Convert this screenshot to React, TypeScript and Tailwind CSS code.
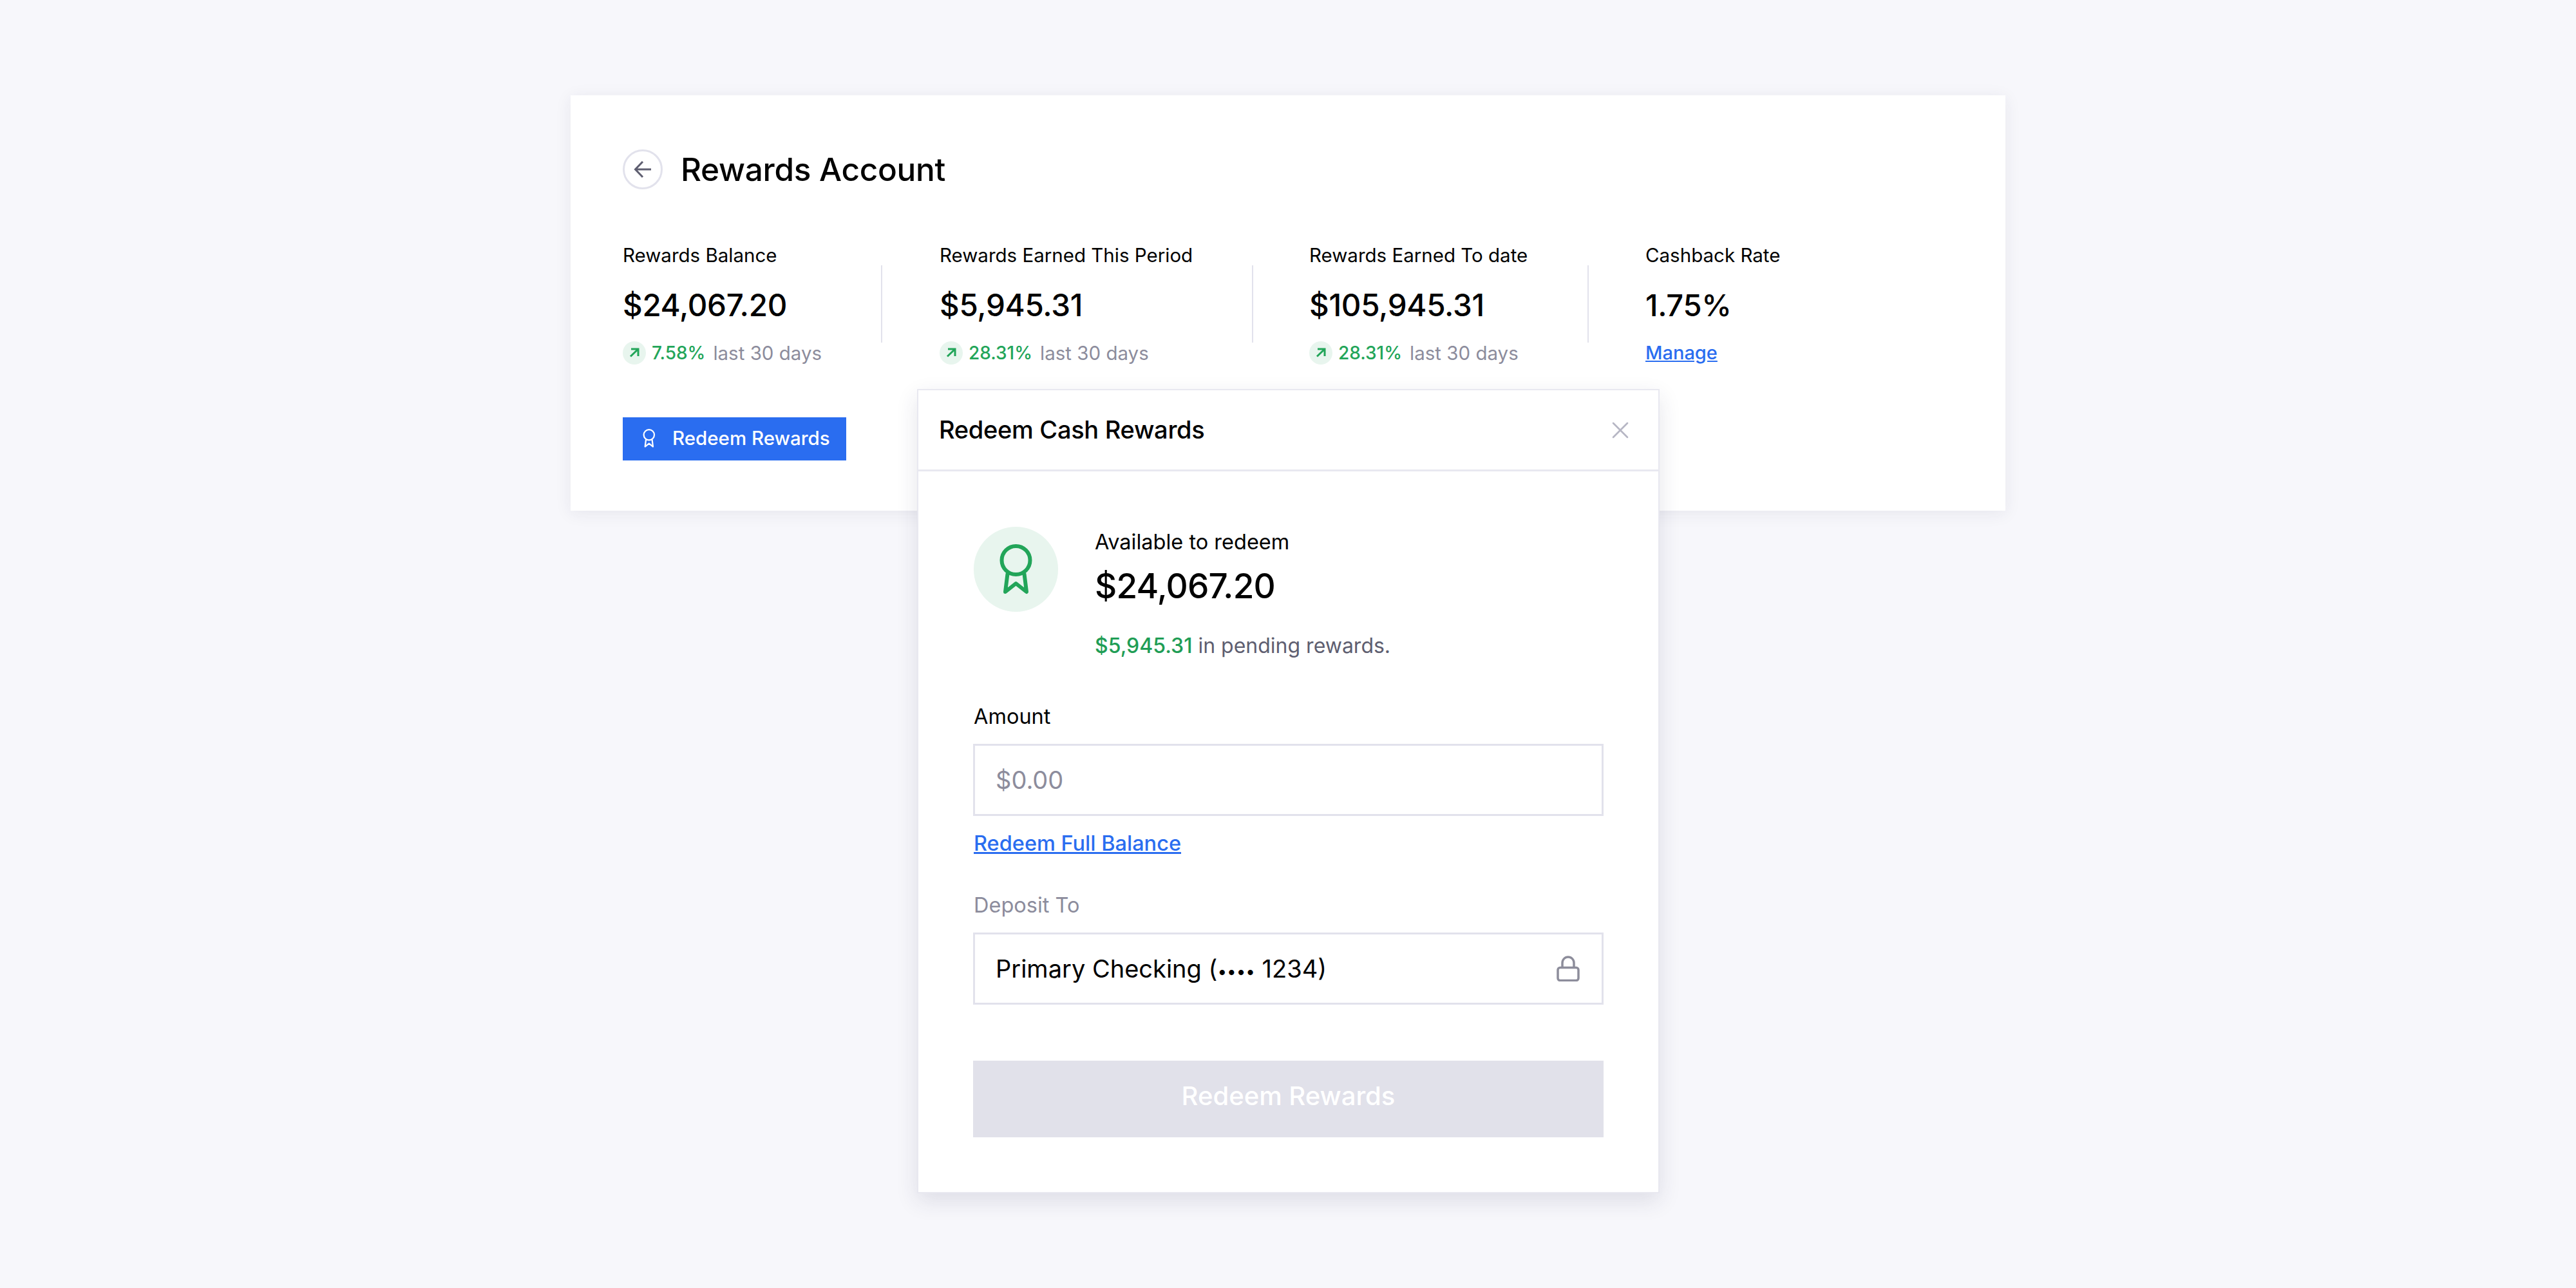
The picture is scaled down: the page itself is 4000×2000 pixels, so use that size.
import { X } from "lucide-react";

const stats = [
  { label: "Rewards Balance", value: "$24,067.20", pct: "7.58%", width: "w-[401px]", gap: "mr-[89px]" },
  { label: "Rewards Earned This Period", value: "$5,945.31", pct: "28.31%", width: "w-[485px]", gap: "mr-[87px]" },
  { label: "Rewards Earned To date", value: "$105,945.31", pct: "28.31%", width: "w-[432px]", gap: "mr-[88px]" },
];

function Award({ className }: { className: string }) {
  return (
    <svg viewBox="0 0 52 78" fill="none" stroke="currentColor" strokeWidth="6" strokeLinejoin="round" strokeLinecap="round" className={className}>
      <circle cx="25.5" cy="25" r="22" />
      <path d="M12.5 46 L9 74 L25.5 61 L42 74 L38.5 46" />
    </svg>
  );
}

function TrendBadge() {
  return (
    <span className="flex h-[36px] w-[36px] shrink-0 items-center justify-center rounded-full bg-[#e8f5ee]">
      <svg viewBox="0 0 36 36" fill="none" stroke="#22a559" strokeWidth="3" className="h-[36px] w-[36px]">
        <path d="M12 23.5 L24 12 M13 12 H24 V23" />
      </svg>
    </span>
  );
}

export default function App() {
  return (
    <div className="relative h-[2000px] w-[4000px] bg-[#f7f7fb] pt-[148px] font-['Inter',sans-serif] text-black">
      <div className="mx-auto h-[645px] w-[2228px] bg-white pl-[81px] pt-[84px] shadow-[0_4px_24px_rgba(40,40,80,0.08)]">
        <div className="flex items-center gap-[28px]">
          <button className="flex h-[62px] w-[62px] items-center justify-center rounded-full border-[3px] border-[#e2e2ec]">
            <svg viewBox="0 0 28 28" fill="none" stroke="#5e5e70" strokeWidth="3" className="h-[28px] w-[28px]">
              <path d="M27 14 H3 M14 2 L2.5 14 L14 26" />
            </svg>
          </button>
          <h1 className="text-[49.5px] font-medium leading-[60px] tracking-[-0.3px]">Rewards Account</h1>
        </div>

        <div className="mt-[82px] flex items-center">
          {stats.map((s) => (
            <div key={s.label} className="flex items-center">
              <div className={s.width}>
                <div className="text-[29.5px] leading-[40px]">{s.label}</div>
                <div className="mt-[28px] text-[47.5px] font-medium leading-[60px] tracking-[-0.3px]">{s.value}</div>
                <div className="mt-[24px] flex h-[40px] items-center">
                  <TrendBadge />
                  <span className="ml-[9px] text-[28px] font-medium text-[#22a559]">{s.pct}</span>
                  <span className="ml-[12px] text-[29.5px] text-[#8c8c9c]">last 30 days</span>
                </div>
              </div>
              <div className={`${s.gap} h-[120px] w-[2px] bg-[#e2e2ec]`} />
            </div>
          ))}
          <div>
            <div className="text-[29.5px] leading-[40px]">Cashback Rate</div>
            <div className="mt-[28px] text-[47px] font-medium leading-[60px] tracking-[-0.3px]">1.75%</div>
            <a className="mt-[24px] block text-[29px] font-medium leading-[40px] text-[#2a6df0] underline">Manage</a>
          </div>
        </div>

        <button className="mt-[80px] flex h-[67px] w-[347px] items-center bg-[#2a6df0] pb-[2px] pl-[31px] text-[29.5px] font-medium text-white">
          <Award className="h-[29px] w-[20px]" />
          <span className="ml-[26px]">Redeem Rewards</span>
        </button>
      </div>

      <div className="absolute left-[1424px] top-[604px] w-[1153px] border-[2px] border-[#e8e8f0] bg-white shadow-[0_12px_32px_rgba(40,40,80,0.12)]">
        <div className="flex h-[126px] items-center justify-between border-b-[3px] border-[#e8e8f0] pl-[32px] pr-[37px]">
          <h2 className="text-[38px] font-medium tracking-[-0.3px]">Redeem Cash Rewards</h2>
          <X size={44} strokeWidth={1.4} className="text-[#b6b6c4]" />
        </div>

        <div className="pb-[85px] pl-[85px] pr-[85px] pt-[86px]">
          <div className="ml-[1px] flex gap-[57px]">
            <div className="flex h-[132px] w-[131px] items-center justify-center rounded-full bg-[#e8f5ee] text-[#22a559]">
              <Award className="h-[78px] w-[52px]" />
            </div>
            <div>
              <div className="text-[32.5px] leading-[48px]">Available to redeem</div>
              <div className="mt-[12px] text-[53px] font-medium leading-[64px] tracking-[-0.8px]">$24,067.20</div>
              <div className="mt-[37px] text-[32px] leading-[48px] text-[#5e5e70]">
                <span className="font-medium text-[#1f9d55]">$5,945.31</span> in pending rewards.
              </div>
            </div>
          </div>

          <label className="ml-[1px] mt-[62px] block text-[32.5px] leading-[48px]">Amount</label>
          <input
            placeholder="$0.00"
            className="mt-[18px] block h-[112px] w-full border-[3px] border-[#e2e2ec] px-[32px] text-[38px] outline-none placeholder:text-[#8c8c9c]"
          />
          <a className="ml-[1px] mt-[19px] block text-[32.5px] font-medium leading-[48px] text-[#2a6df0] underline">Redeem Full Balance</a>

          <label className="ml-[1px] mt-[48px] block text-[32.5px] leading-[48px] text-[#8c8c9c]">Deposit To</label>
          <div className="mt-[18px] flex h-[112px] items-center justify-between border-[3px] border-[#e2e2ec] pl-[32px] pr-[34px] text-[38px]">
            <span>
              Primary Checking (<span className="text-[26px]">••••</span> 1234)
            </span>
            <svg viewBox="0 0 36 40" fill="none" stroke="#8d8d9b" strokeWidth="3.5" className="h-[40px] w-[36px]">
              <rect x="2" y="18.5" width="32" height="20" rx="3.5" />
              <path d="M9 18 V11 a9 9 0 0 1 18 0 V18" />
            </svg>
          </div>

          <button className="mt-[87px] h-[119px] w-full bg-[#e1e1ea] pb-[10px] text-[40px] font-medium text-white">Redeem Rewards</button>
        </div>
      </div>
    </div>
  );
}
